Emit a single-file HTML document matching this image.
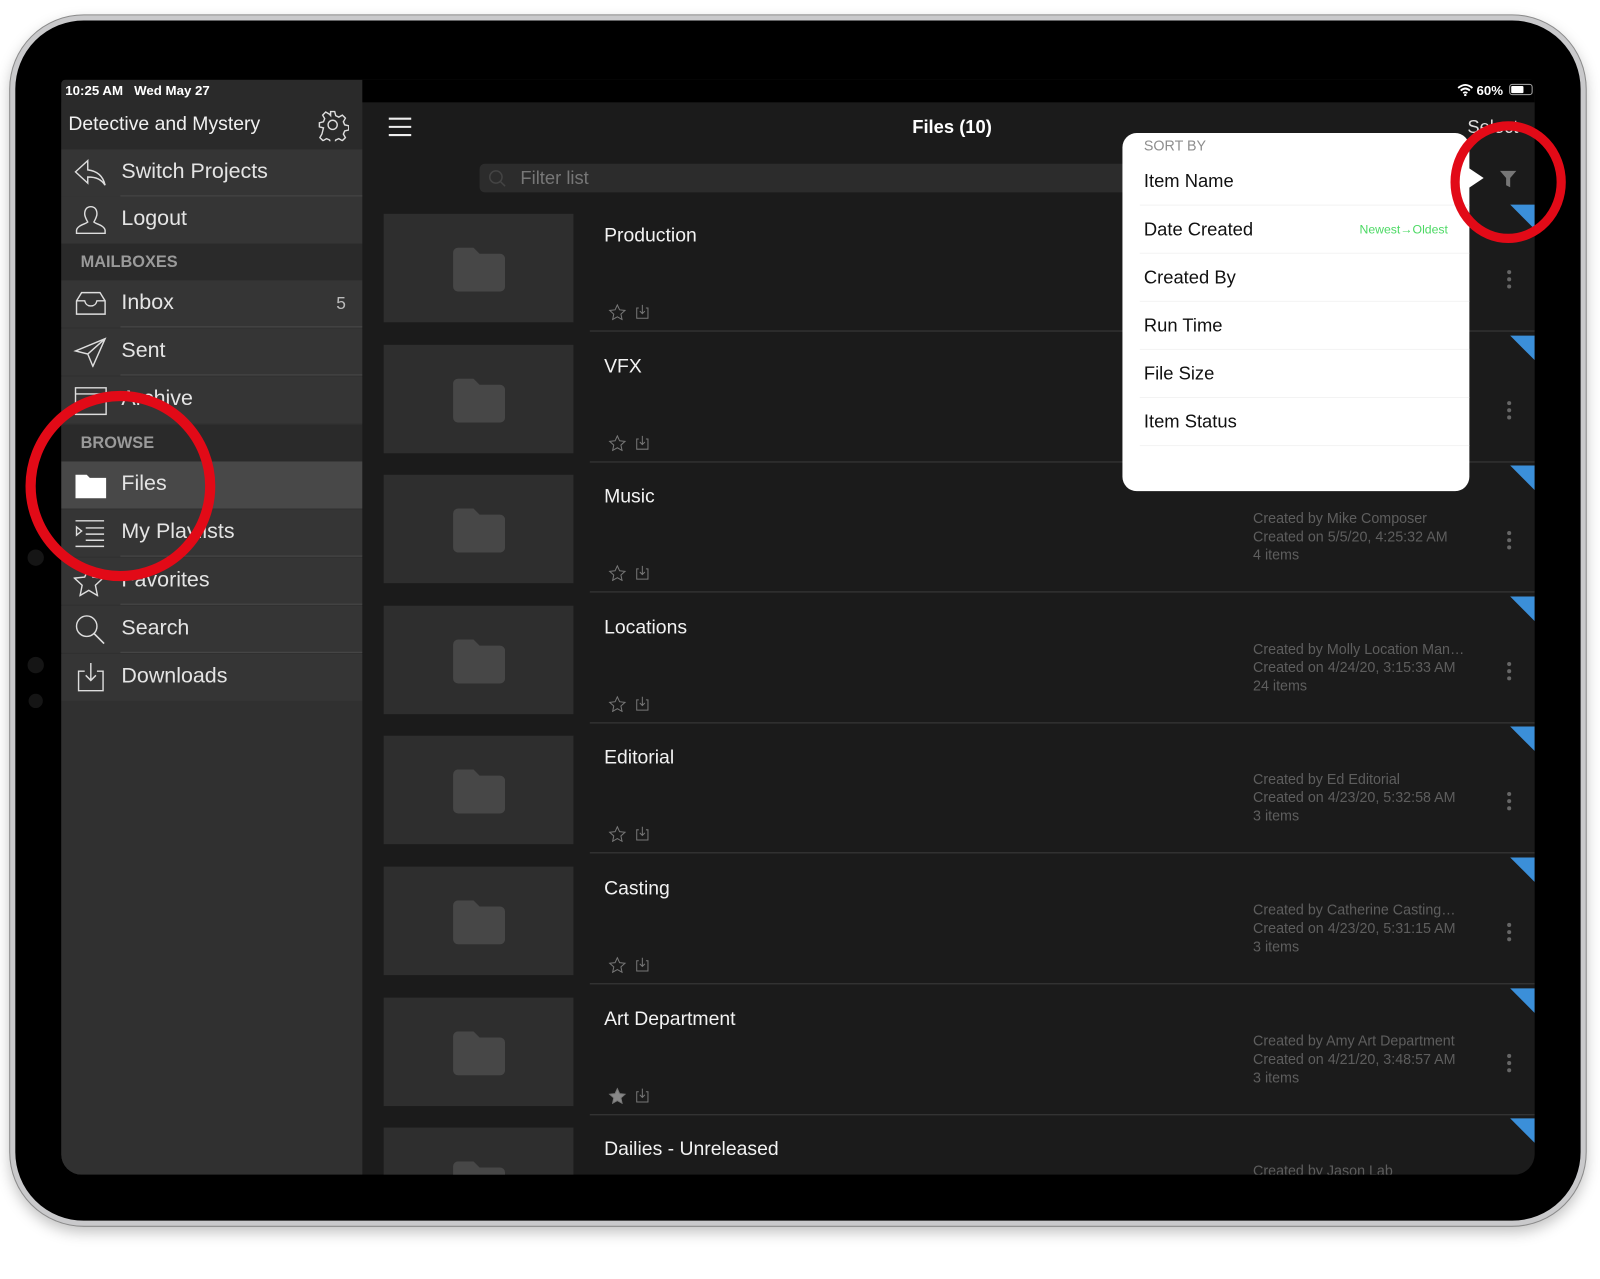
<!DOCTYPE html>
<html><head><meta charset="utf-8"><style>
*{margin:0;padding:0;box-sizing:border-box}
html,body{width:1600px;height:1279px;overflow:hidden;background:#fff;font-family:"Liberation Sans",sans-serif}
#w{position:absolute;left:0;top:0;width:1568px;height:1250px;transform:scale(1.0204,1.0232);transform-origin:0 0}
.a{position:absolute}
.bez{left:10px;top:15px;width:1544px;height:1183px;border-radius:72px;background:#000;border:5px solid #c9c9cb;box-shadow:0 0 0 1px #8a8a8a,0 6px 14px rgba(0,0,0,.25)}
.scr{left:60px;top:78px;width:1444px;height:1070px;background:#1b1b1b;overflow:hidden;border-radius:4px 4px 20px 20px}
.sb{left:0;top:0;width:295px;height:1070px;background:#303030}
.row{position:absolute;left:0;width:295px;height:46px;background:#353535}
.row .t{position:absolute;left:59px;top:10px;font-size:21px;color:#e4e4e4}
.row .ln{position:absolute;left:58px;right:0;bottom:0;height:1px;background:#4a4a4a}
.hd{position:absolute;left:0;width:295px;height:36px;background:#2a2a2a;color:#9a9a9a;font-weight:bold;font-size:16px;padding:10px 0 0 19px}
.ic{position:absolute;left:12px;top:8px}
.thumb{position:absolute;left:316px;width:186px;height:106px;background:#2e2e2e}
.fold{position:absolute;left:68px;top:33px;width:51px;height:43px}
.tt{position:absolute;left:532px;font-size:19px;color:#f2f2f2}
.sep{position:absolute;left:518px;right:0;height:1px;background:#3c3c3c}
.meta{position:absolute;left:1168px;font-size:14px;color:#5e5e5e;line-height:18px;white-space:nowrap}
.dots{position:absolute;left:1417px;width:5px}
.dots i{display:block;width:4px;height:4px;border-radius:2px;background:#666;margin-bottom:3px}
.tri{position:absolute;left:1420px;width:0;height:0;border-top:24px solid #3b8fd9;border-left:24px solid transparent}
.pop{left:1040px;top:52px;width:340px;height:350px;background:#fff;border-radius:14px}
.pi{position:absolute;left:21px;font-size:18px;color:#111}
.ps{position:absolute;left:17px;right:0;height:1px;background:#f3f3f3}
</style></head><body><div id="w">
<div class="a bez"></div>
<div class="a scr">
 <div class="a" style="left:295px;top:0;width:1149px;height:22px;background:#000"></div>
 <div class="a" style="left:0;top:0;width:295px;height:68px;background:#2a2a2a"></div>
 <div class="a" style="left:4px;top:3px;font-size:13px;color:#fff;font-weight:bold">10:25 AM&nbsp;&nbsp; Wed May 27</div>
 <div class="a" style="left:1387px;top:3px;font-size:13px;color:#fff;font-weight:bold">60%</div>
 <svg class="a" style="left:1368px;top:4px" width="16" height="12" viewBox="0 0 16 12"><path d="M1 4Q8-2 15 4M3.5 6.5Q8 2.5 12.5 6.5M6 9Q8 7.5 10 9" stroke="#fff" stroke-width="1.8" fill="none"/><circle cx="8" cy="11" r="1.2" fill="#fff"/></svg>
 <div class="a" style="left:1419px;top:4px;width:23px;height:11px;border:1px solid #aaa;border-radius:3px"><div style="margin:1px;width:12px;height:7px;background:#fff;border-radius:1px"></div></div>
 <div class="a" style="left:0;top:22px;width:295px;height:46px;background:#2a2a2a"></div>
 <div class="a" style="left:7px;top:33px;font-size:19px;color:#f0f0f0">Detective and Mystery</div>
 <svg class="a" style="left:250px;top:28px" width="32" height="32" viewBox="0 0 32 32"><path d="M14 3h4l1 4 3 1.5 3.5-2 3 3-2 3.5 1.3 3 4 1v4l-4 1-1.3 3 2 3.5-3 3-3.5-2-3 1.3-1 4h-4l-1-4-3-1.3-3.5 2-3-3 2-3.5L7 19l-4-1v-4l4-1 1.2-3-2-3.5 3-3 3.5 2L14 7z" fill="none" stroke="#ddd" stroke-width="1.4"/><circle cx="16" cy="16" r="4.5" fill="none" stroke="#ddd" stroke-width="1.4"/></svg>
 <div class="a sb" style="top:68px;height:1002px"></div>
 <div class="row" style="top:68px"><svg class="ic" width="34" height="30" viewBox="0 0 34 30"><path d="M14 3L2 14l12 11v-6c8 0 13 2 17 8-2-9-8-14-17-15z" fill="none" stroke="#ddd" stroke-width="1.4"/></svg><div class="t">Switch Projects</div><div class="ln"></div></div>
 <div class="row" style="top:114px"><svg class="ic" width="34" height="30" viewBox="0 0 34 30"><path d="M17 2c-4 0-6 3-6 7 0 3 2 6 3 8-2 2-10 3-11 8v3h28v-3c-1-5-9-6-11-8 1-2 3-5 3-8 0-4-2-7-6-7z" fill="none" stroke="#ddd" stroke-width="1.4"/></svg><div class="t">Logout</div></div>
 <div class="hd" style="top:160px">MAILBOXES</div>
 <div class="row" style="top:196px"><svg class="ic" width="34" height="30" viewBox="0 0 34 30"><path d="M3 12l5-8h18l5 8v13H3zM3 12h8c1 4 3 5 6 5s5-1 6-5h8" fill="none" stroke="#ddd" stroke-width="1.4"/></svg><div class="t">Inbox</div><div class="a" style="right:16px;top:13px;color:#bbb;font-size:17px">5</div><div class="ln"></div></div>
 <div class="row" style="top:243px"><svg class="ic" width="34" height="30" viewBox="0 0 34 30"><path d="M31 2L2 14l12 3 5 12zM14 17L31 2" fill="none" stroke="#ddd" stroke-width="1.4"/></svg><div class="t">Sent</div><div class="ln"></div></div>
 <div class="row" style="top:290px"><svg class="ic" width="34" height="30" viewBox="0 0 34 30"><path d="M2 3h30v26H2zM2 9h30" fill="none" stroke="#ddd" stroke-width="1.4"/></svg><div class="t">Archive</div></div>
 <div class="hd" style="top:337px">BROWSE</div>
 <div class="row" style="top:373px;background:#484848"><svg class="ic" width="34" height="30" viewBox="0 0 34 30"><path d="M2 5h11l3 3h16v20H2z" fill="#fff"/></svg><div class="t">Files</div></div>
 <div class="row" style="top:420px"><svg class="ic" width="34" height="30" viewBox="0 0 34 30"><path d="M2 3h28M12 10h18M12 16h18M12 22h18M2 28h28M3 9l5 4-5 4z" fill="none" stroke="#ddd" stroke-width="1.4"/></svg><div class="t">My Playlists</div><div class="ln"></div></div>
 <div class="row" style="top:467px"><svg class="ic" width="34" height="30" viewBox="0 0 34 30"><path d="M15 2l4 9 10 1-7.5 7 2 10-8.5-5-8.5 5 2-10L1 12l10-1z" fill="none" stroke="#ddd" stroke-width="1.4"/></svg><div class="t">Favorites</div><div class="ln"></div></div>
 <div class="row" style="top:514px"><svg class="ic" width="34" height="30" viewBox="0 0 34 30"><circle cx="13" cy="12" r="10" fill="none" stroke="#ddd" stroke-width="1.4"/><path d="M20 19l10 10" stroke="#ddd" stroke-width="1.6"/></svg><div class="t">Search</div><div class="ln"></div></div>
 <div class="row" style="top:561px"><svg class="ic" width="34" height="30" viewBox="0 0 34 30"><path d="M11 9H5v19h24V9h-6M17 1v17M12 13l5 5 5-5" fill="none" stroke="#ddd" stroke-width="1.4"/></svg><div class="t">Downloads</div></div>
 <div class="a" style="left:0;top:607px;width:295px;height:463px;background:#303030"></div>

 <svg class="a" style="left:320px;top:36px" width="24" height="20"><path d="M1 2h22M1 10h22M1 18h22" stroke="#eee" stroke-width="2"/></svg>
 <div class="a" style="left:834px;top:36px;font-size:18px;font-weight:bold;color:#fff">Files (10)</div>
 <div class="a" style="left:1378px;top:36px;font-size:18px;color:#ddd">Select</div>
 <div class="a" style="left:410px;top:82px;width:700px;height:28px;background:#2c2c2c;border-radius:5px"></div>
 <svg class="a" style="left:418px;top:87px" width="18" height="18"><circle cx="8" cy="8" r="6" fill="none" stroke="#444" stroke-width="1.5"/><path d="M12 12l5 5" stroke="#444" stroke-width="1.5"/></svg>
 <div class="a" style="left:450px;top:86px;font-size:18px;color:#777">Filter list</div>
 <svg class="a" style="left:1409px;top:88px" width="18" height="18"><path d="M1 1h16l-6 7v9l-4-2V8z" fill="#777"/></svg>

 <div id="rows"></div>
</div>
<script>
var R=[["Production","Jane Producer","5/6/20, 9:12:10 AM","8 items"],["VFX","Vic Effects","5/6/20, 8:02:41 AM","5 items"],["Music","Mike Composer","5/5/20, 4:25:32 AM","4 items"],["Locations","Molly Location Man…","4/24/20, 3:15:33 AM","24 items"],["Editorial","Ed Editorial","4/23/20, 5:32:58 AM","3 items"],["Casting","Catherine Casting…","4/23/20, 5:31:15 AM","3 items"],["Art Department","Amy Art Department","4/21/20, 3:48:57 AM","3 items"],["Dailies - Unreleased","Jason Lab","4/20/20, 2:11:04 AM","6 items"]];
var h="";R.forEach(function(r,i){var t=130+i*127.6;
h+='<div class="thumb" style="top:'+(t+1)+'px"><svg class="fold" viewBox="0 0 51 43"><path d="M0 5a5 5 0 0 1 5-5h15l6 6h20a5 5 0 0 1 5 5v27a5 5 0 0 1-5 5H5a5 5 0 0 1-5-5z" fill="#474747"/></svg></div>';
h+='<div class="tt" style="top:'+(t+12)+'px">'+r[0]+'</div>';
h+='<svg class="a" style="left:536px;top:'+(t+89)+'px" width="44" height="16"><path d="M9 1l2.2 4.8 5.3.6-4 3.6 1.1 5.2L9 12.6 4.4 15.2 5.5 10 1.5 6.4l5.3-.6z" fill="'+(i==6?'#888':'none')+'" stroke="#777" stroke-width="1"/><path d="M30 4h-2v10h11V4h-2M33.5 1v8M31 7l2.5 2.5L36 7" fill="none" stroke="#777" stroke-width="1"/></svg>';
h+='<div class="sep" style="top:'+(t+115)+'px"></div>';
h+='<div class="meta" style="top:'+(t+34)+'px">Created by '+r[1]+'<br>Created on '+r[2]+'<br>'+r[3]+'</div>';
h+='<div class="dots" style="top:'+(t+56)+'px"><i></i><i></i><i></i></div>';
h+='<div class="tri" style="top:'+(t-8)+'px"></div>';});
document.getElementById('rows').outerHTML=h;
</script>
<div class="a pop" style="left:1100px;top:130px">
 <div class="a" style="right:-14px;top:34px;width:0;height:0;border-left:15px solid #fff;border-top:10px solid transparent;border-bottom:10px solid transparent"></div>
 <div class="a" style="left:21px;top:4px;font-size:14px;color:#8e8e8e">SORT BY</div>
 <div class="pi" style="top:37px">Item Name</div><div class="ps" style="top:70px"></div>
 <div class="pi" style="top:84px">Date Created</div><div class="a" style="right:21px;top:87px;font-size:12px;color:#4cd964">Newest→Oldest</div><div class="ps" style="top:117px"></div>
 <div class="pi" style="top:131px">Created By</div><div class="ps" style="top:164px"></div>
 <div class="pi" style="top:178px">Run Time</div><div class="ps" style="top:211px"></div>
 <div class="pi" style="top:225px">File Size</div><div class="ps" style="top:258px"></div>
 <div class="pi" style="top:272px">Item Status</div><div class="ps" style="top:305px"></div>
</div>
<svg class="a" style="left:0;top:0" width="1568" height="1250">
 <circle cx="118" cy="475" r="88" fill="none" stroke="#e20a17" stroke-width="10"/>
 <ellipse cx="1478" cy="178" rx="52" ry="55" fill="none" stroke="#e20a17" stroke-width="9"/>
 <circle cx="35" cy="545" r="8" fill="#151515"/><circle cx="35" cy="650" r="8" fill="#151515"/><circle cx="35" cy="685" r="7" fill="#151515"/>
</svg>
</div></body></html>
